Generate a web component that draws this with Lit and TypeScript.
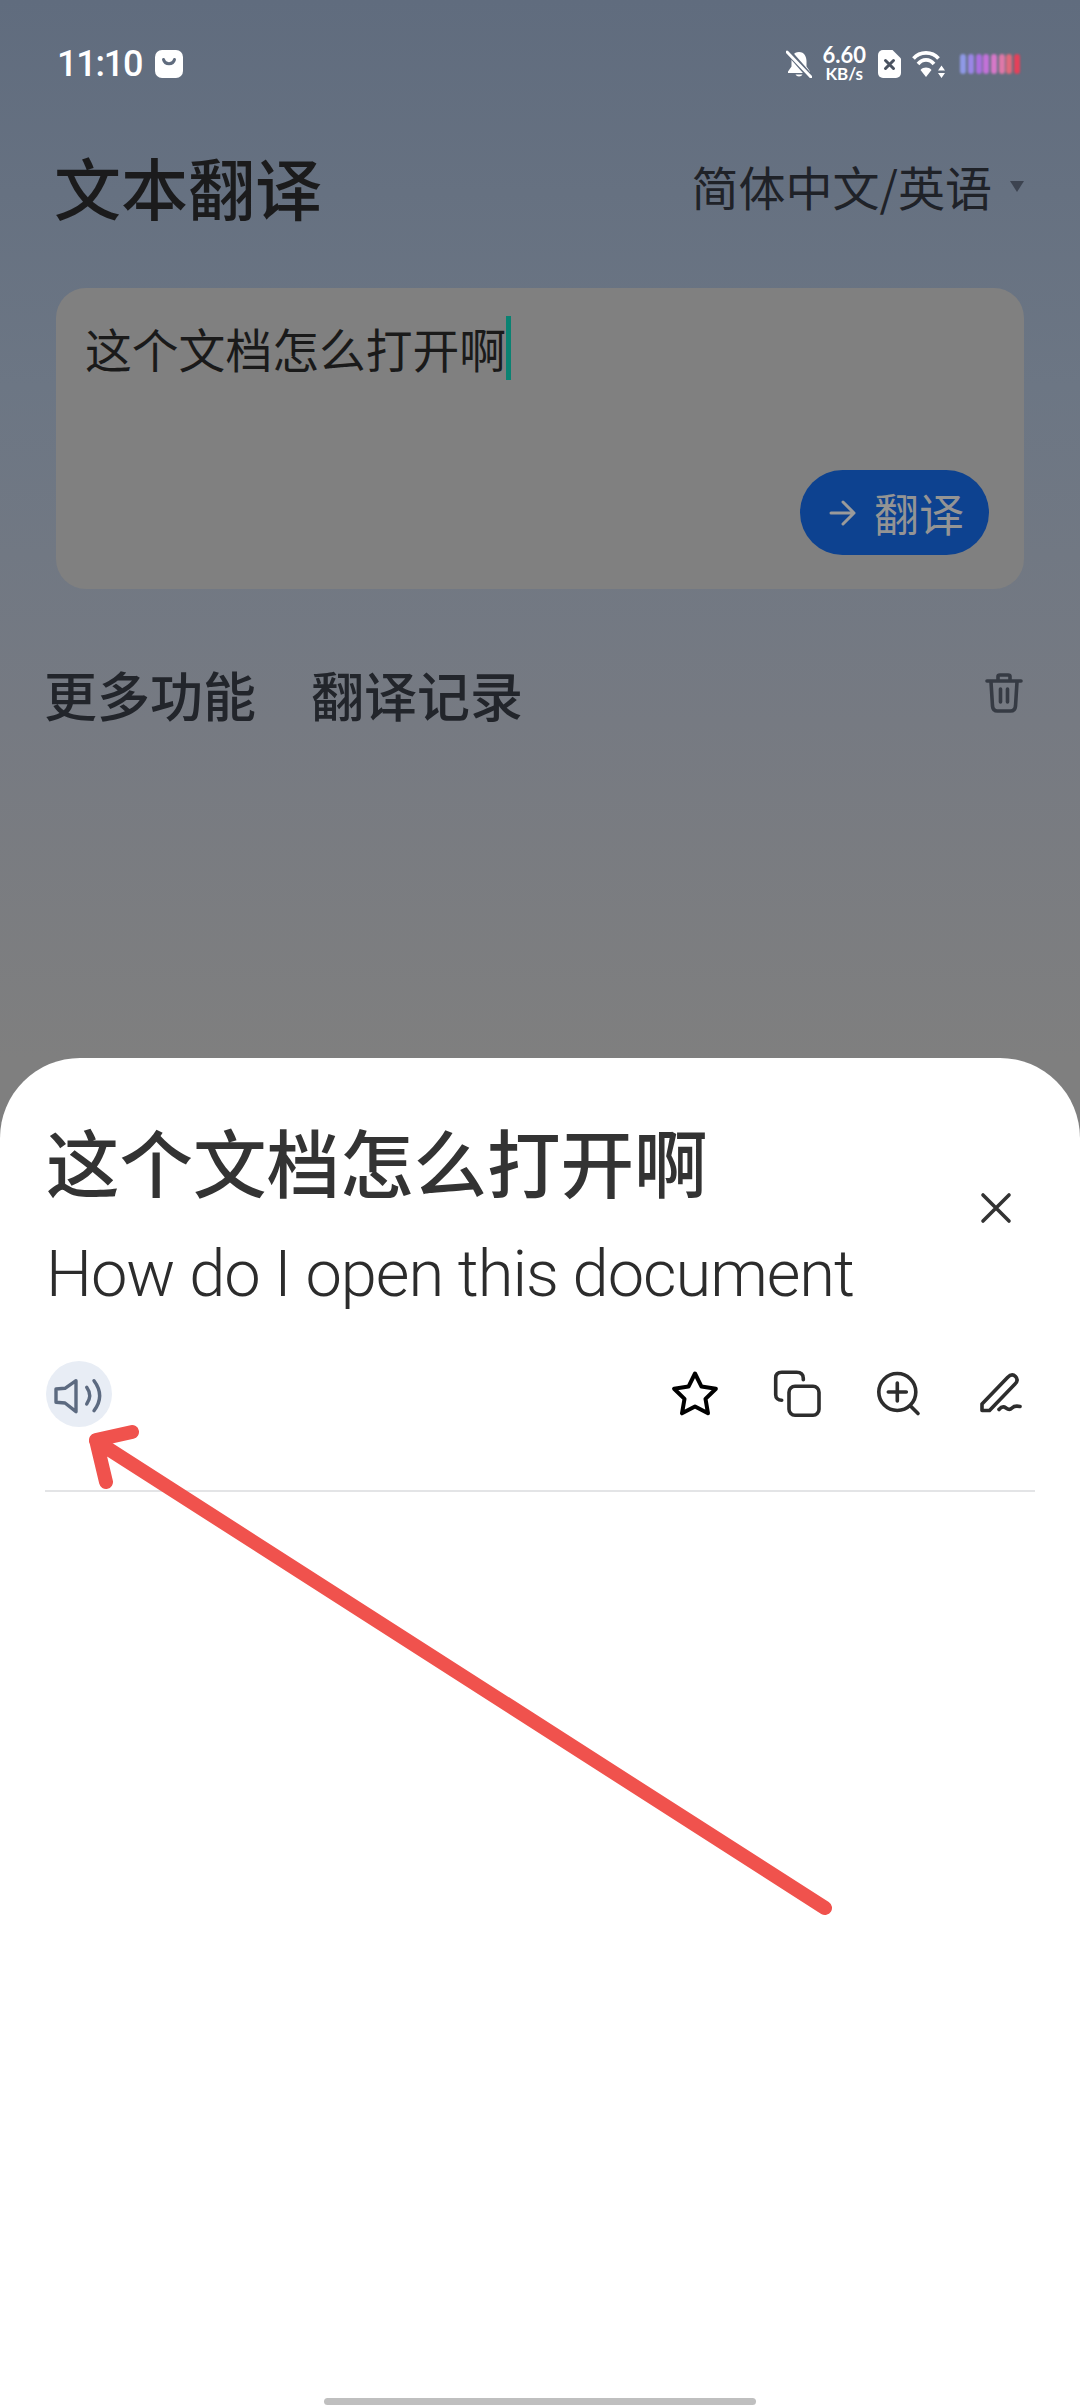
import { LitElement, html, css, svg } from "lit";
import { customElement } from "lit/decorators.js";

const batteryColors = ["#8f99e6", "#9a86e6", "#ab6fe0", "#c272d8", "#d678c8", "#de78a8", "#e06a7c", "#e6405a"];

@customElement("app-root")
export class AppRoot extends LitElement {
  static styles = css`
    :host {
      display: block;
      width: 1080px;
      height: 2408px;
      position: relative;
      overflow: hidden;
      background: linear-gradient(180deg, #606c7e 0%, #6c7684 16%, #767a82 30%, #7f7f7f 44%);
      font-family: "Noto Sans CJK SC", "Noto Sans", sans-serif;
    }
    .page { display: flex; flex-direction: column; height: 2408px; }
    svg { display: block; flex: none; }

    .status {
      box-sizing: border-box;
      height: 104px;
      padding: 24px 60px 0 57px;
      display: flex;
      align-items: center;
      color: #fff;
    }
    .time { width: 82px; white-space: nowrap; font: 500 36px/1 Roboto, sans-serif; letter-spacing: -1.2px; margin-right: 16px; }
    .spacer { flex: 1; }
    .net {
      width: 46px;
      margin: -2px 11px 0 9px;
      display: flex;
      flex-direction: column;
      align-items: center;
      font-family: Lato, sans-serif;
      font-weight: 700;
    }
    .net .v { font-size: 22px; line-height: 21px; }
    .net .u { font-size: 17px; line-height: 17px; }
    .wifi { margin: 0 14px 0 11px; }
    .battery { display: flex; gap: 1.7px; filter: blur(0.8px); }
    .battery i { display: block; width: 6px; height: 20px; border-radius: 3px; }

    .head {
      height: 172px;
      padding: 0 56px 8px 54px;
      box-sizing: border-box;
      display: flex;
      align-items: center;
      justify-content: space-between;
    }
    .title { font-size: 67px; font-weight: 500; color: #1b1b1c; line-height: 90px; }
    .lang { display: flex; align-items: center; gap: 18px; font-size: 47px; line-height: 60px; color: #1f2228; }
    .tri { width: 0; height: 0; border: 7.5px solid transparent; border-top: 11px solid #3c4350; border-bottom: 0; }

    .card {
      box-sizing: border-box;
      margin: 12px 56px 0;
      height: 301px;
      background: #808080;
      border-radius: 30px;
      padding: 28px 29px 34px;
      display: flex;
      flex-direction: column;
      align-items: flex-start;
    }
    .input { display: flex; align-items: stretch; font-size: 46.8px; line-height: 64px; color: #1a1a1a; }
    .caret { width: 5px; background: #0a8272; }
    .go {
      align-self: flex-end;
      margin-top: auto;
      box-sizing: border-box;
      height: 85px;
      width: 189px;
      border-radius: 43px;
      background: #0d4290;
      color: #949494;
      font-size: 45px;
      display: flex;
      align-items: center;
      padding-left: 29px;
      gap: 18px;
      margin-right: 6px;
    }

    .tabs {
      margin-top: 55px;
      height: 100px;
      padding: 0 57px 0 44px;
      display: flex;
      align-items: center;
      gap: 55px;
      font-size: 53px;
      font-weight: 500;
      color: #22252b;
    }
    .tabs .trash { margin-left: auto; margin-top: -2px; }

    .sheet {
      flex: 1;
      margin-top: 314px;
      background: #fff;
      border-radius: 80px 80px 0 0;
      display: flex;
      flex-direction: column;
    }
    .texts { display: flex; padding: 55px 68px 0 46px; justify-content: space-between; }
    .src { font-size: 73.5px; line-height: 94px; font-weight: 500; color: #333; }
    .dst { margin-top: 16px; font-family: Roboto, sans-serif; font-weight: 300; font-size: 65px; letter-spacing: -1.05px; line-height: 103px; color: #2c2c2c; }
    .close { margin-top: 79px; }
    .actions { display: flex; align-items: center; height: 67px; margin-top: 34px; padding: 0 55px 0 46px; }
    .spk { width: 66px; height: 66px; border-radius: 50%; background: #e8edf5; }
    .tools { margin-left: auto; display: flex; gap: 54px; }
    .divider { height: 2px; background: #e3e4e6; margin: 63px 45px 0; }
    .home { margin: auto 324px 3px; height: 7px; border-radius: 4px; background: #bfbfbf; }

    .mark { position: absolute; left: 0; top: 0; pointer-events: none; }
  `;

  private icon(w: number, h: number, cls: string, body: unknown) {
    return html`<svg class=${cls} width=${w} height=${h} viewBox="0 0 ${w} ${h}" fill="none" stroke="#2d2d2d" stroke-width="3.6" stroke-linecap="round" stroke-linejoin="round">${body}</svg>`;
  }

  render() {
    return html`
      <div class="page">
        <div class="status">
          <span class="time">11:10</span>
          ${this.icon(28, 28, "", svg`<rect x="0" y="0" width="28" height="28" rx="7" fill="#fff" stroke="none"/><path d="M8.5 9.5c1.5 5.5 9.5 5.5 11 0" stroke="#606c7e" stroke-width="3"/>`)}
          <span class="spacer"></span>
          ${this.icon(26, 28, "", svg`<path d="M13 2C7.5 2 5.5 7 5.5 11v5.5L2 21.5V23h22v-1.5l-3.500-5V11C20.500 7 18.500 2 13 2z" fill="#fff" stroke="none"/><path d="M9.500 24.500a3.800 3.200 0 0 0 7 0z" fill="#fff" stroke="none"/><path d="M2 1.500 24 26.500" stroke="#606c7e" stroke-width="6"/><path d="M1 2 25 27" stroke="#fff" stroke-width="3"/>`)}
          <div class="net"><span class="v">6.60</span><span class="u">KB/s</span></div>
          ${this.icon(23, 28, "", svg`<path d="M5 0H14.500L23 8.500V23a5 5 0 0 1-5 5H5a5 5 0 0 1-5-5V5a5 5 0 0 1 5-5z" fill="#fff" stroke="none"/><path d="M7.500 10.500 15.500 18.500M15.500 10.500 7.500 18.500" stroke="#4a5260" stroke-width="3"/>`)}
          ${this.icon(34, 28, "wifi", svg`<g stroke="#fff" stroke-width="3.600" stroke-linecap="butt"><path d="M1.500 8.500C8 1 20 1 26.500 8.500"/><path d="M6 14C10.500 8.500 17.500 8.500 22 14"/></g><path d="M14 27 8.500 20C11.500 16.800 16.500 16.800 19.500 20z" fill="#fff" stroke="none"/><path d="M29.500 15.500 33 20.500H26zM29.500 28 26 23H33z" fill="#fff" stroke="none"/>`)}
          <div class="battery">${batteryColors.map((c) => html`<i style="background:${c}"></i>`)}</div>
        </div>

        <div class="head">
          <div class="title">文本翻译</div>
          <div class="lang"><span>简体中文/英语</span><span class="tri"></span></div>
        </div>

        <div class="card">
          <div class="input"><span>这个文档怎么打开啊</span><span class="caret"></span></div>
          <div class="go">
            <svg width="27" height="28" viewBox="0 0 27 28" fill="none" stroke="#9a9a9a" stroke-width="3" stroke-linecap="round" stroke-linejoin="round"><path d="M2 14H25M14 3 25 14 14 25"/></svg>
            <span>翻译</span>
          </div>
        </div>

        <div class="tabs">
          <span>更多功能</span>
          <span>翻译记录</span>
          <svg class="trash" width="38" height="40" viewBox="0 0 38 40" fill="none" stroke="#363b44" stroke-width="3.600" stroke-linecap="round" stroke-linejoin="round"><path d="M2 8H36M13 7V3.500C13 2.500 14 2 15 2H23C24 2 25 2.500 25 3.500V7M6 9 7.500 33C7.800 36.500 9.500 38 12.500 38H25.500C28.500 38 30.200 36.500 30.500 33L32 9M15.500 16V29M22.500 16V29"/></svg>
        </div>

        <div class="sheet">
          <div class="texts">
            <div>
              <div class="src">这个文档怎么打开啊</div>
              <div class="dst">How do I open this document</div>
            </div>
            <svg class="close" width="32" height="32" viewBox="0 0 32 32" fill="none" stroke="#333" stroke-width="3.600" stroke-linecap="round"><path d="M3 3 29 29M29 3 3 29"/></svg>
          </div>
          <div class="actions">
            <div class="spk">
              <svg width="66" height="66" viewBox="0 0 66 66" fill="none" stroke="#5c6a80" stroke-width="3.400" stroke-linecap="round" stroke-linejoin="round"><path d="M30 19.700 19 27.300 10 28V41.300L19 42 30 50.700z"/><path d="M40.700 26.300Q46.700 34.700 40.700 43M48 19.700Q59.300 34.700 48 49.700"/></svg>
            </div>
            <div class="tools">
              ${this.icon(48, 48, "", svg`<path d="M24 3.500 30.500 16.600 44.900 18.700 34.500 28.900 37 43.300 24 36.500 11 43.300 13.500 28.900 3.100 18.700 17.500 16.600z" stroke="#000" stroke-width="4"/>`)}
              ${this.icon(48, 48, "", svg`<path d="M30.300 9.700V8.500C30.300 4.500 28 2.300 23.700 2.300H8.700C4.700 2.300 2.700 4.500 2.700 8V24.700C2.700 28 5 30.300 8.700 30.300"/><rect x="16" y="16.300" width="30" height="29" rx="6"/>`)}
              ${this.icon(48, 48, "", svg`<circle cx="22.300" cy="22" r="18.500"/><path d="M13.300 22H31.300M22.300 13V31M35.500 36 43 43.500"/>`)}
              ${this.icon(48, 48, "", svg`<path d="M5 34 30.500 7.500C33.500 4.500 36 4 38.500 6.500 41 9 40.500 11.500 38 14L12.500 40.500H5z"/><path d="M22 39.500C25 36 27 36.500 29 38S33 40 35 38 39 35.500 43 36.500"/>`)}
            </div>
          </div>
          <div class="divider"></div>
          <div class="home"></div>
        </div>
      </div>

      <svg class="mark" width="1080" height="2408" viewBox="0 0 1080 2408" fill="none" stroke="#f0524d" stroke-width="14" stroke-linecap="round" stroke-linejoin="round">
        <path d="M825 1908 96 1441M132 1432 96 1440 106 1482"/>
      </svg>
    `;
  }
}
